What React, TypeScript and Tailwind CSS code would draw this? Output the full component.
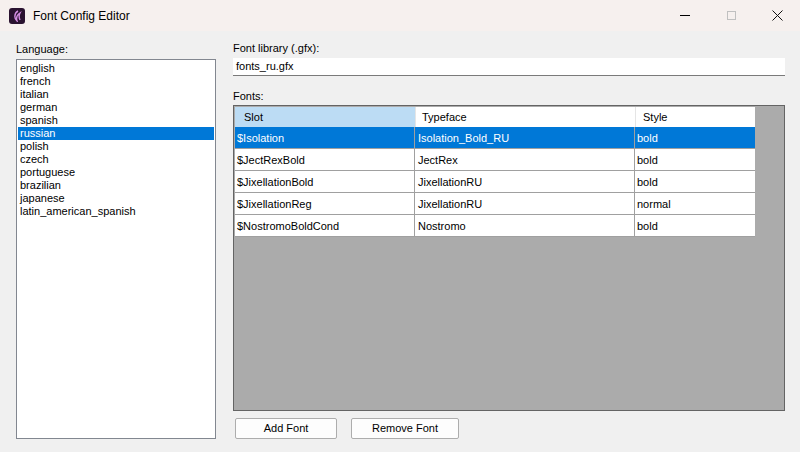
const langs = ["english","french","italian","german","spanish","russian","polish","czech","portuguese","brazilian","japanese","latin_american_spanish"];
const rows = [
  ["$Isolation","Isolation_Bold_RU","bold"],
  ["$JectRexBold","JectRex","bold"],
  ["$JixellationBold","JixellationRU","bold"],
  ["$JixellationReg","JixellationRU","normal"],
  ["$NostromoBoldCond","Nostromo","bold"],
];

export default function App() {
  return (
    <div className="w-[800px] h-[452px] flex flex-col bg-[#f0f0f0] text-[11px] text-black overflow-hidden" style={{ fontFamily: '"Liberation Sans", Arial, sans-serif' }}>
      <div className="h-[31px] bg-[#f6f0ee] flex items-center shrink-0">
        <div className="ml-[9px] w-[16px] h-[16px] rounded-[3px] bg-[#2a1230] flex items-center justify-center">
          <svg width="12" height="12" viewBox="0 0 12 12"><path d="M7 1 C3 3 3 9 6 11 C5 8 6 5 9 3 C8 5 8 8 9 10" stroke="#d28ce0" strokeWidth="1.4" fill="none"/></svg>
        </div>
        <span className="ml-[8px] text-[12px]">Font Config Editor</span>
        <div className="ml-auto flex h-full">
          <div className="w-[46px] flex items-center justify-center"><div className="w-[10px] h-px bg-black" /></div>
          <div className="w-[46px] flex items-center justify-center"><div className="w-[9px] h-[9px] border border-[#c0c0c0]" /></div>
          <div className="w-[46px] flex items-center justify-center">
            <svg width="11" height="11" viewBox="0 0 11 11"><path d="M0.5 0.5L10.5 10.5M10.5 0.5L0.5 10.5" stroke="#111" strokeWidth="1"/></svg>
          </div>
        </div>
      </div>
      <div className="flex flex-1 pl-[16px] pr-[15px] pt-[9px] pb-[13px] gap-[17px]">
        <div className="w-[200px] flex flex-col">
          <div className="h-[19px] leading-[19px]">Language:</div>
          <div className="flex-1 bg-white border border-[#828790] pt-[2px] px-px">
            {langs.map((l) => (
              <div key={l} className={`h-[13px] leading-[13px] pl-[2px] ${l === "russian" ? "bg-[#0078d7] text-white" : ""}`}>{l}</div>
            ))}
          </div>
        </div>
        <div className="flex-1 flex flex-col">
          <div className="h-[14px] leading-[14px] pt-px">Font library (.gfx):</div>
          <div className="mt-[4px] h-[18px] bg-white border-b border-[#7a7a7a] px-[3px] leading-[17px]">fonts_ru.gfx</div>
          <div className="mt-[12px] h-[16px] leading-[16px]">Fonts:</div>
          <div className="mt-px flex-1 bg-[#ababab] border border-[#646464] p-px">
            <div className="w-[520px] bg-white">
              <div className="flex h-[20px] leading-[20px]">
                <div className="w-[180px] bg-[#bcdcf4] pl-[9px]">Slot</div>
                <div className="w-[220px] border-l border-[#e5e5e5] pl-[6px]">Typeface</div>
                <div className="w-[120px] border-l border-[#e5e5e5] pl-[7px]">Style</div>
              </div>
            </div>
            {rows.map((r, i) => (
              <div key={i} className={`w-[520px] flex h-[22px] leading-[22px] border-b border-[#a0a0a0] ${i === 0 ? "bg-[#0078d7] text-white" : "bg-white"}`}>
                <div className="w-[180px] pl-[2px] border-r border-[#a0a0a0]">{r[0]}</div>
                <div className="w-[220px] pl-[3px] border-r border-[#a0a0a0]">{r[1]}</div>
                <div className="w-[120px] pl-[2px]">{r[2]}</div>
              </div>
            ))}
          </div>
          <div className="mt-[7px] flex gap-[14px] pl-[2px]">
            <button className="w-[102px] h-[21px] bg-[#fdfdfd] border border-[#adadad] rounded-[2px]">Add Font</button>
            <button className="w-[108px] h-[21px] bg-[#fdfdfd] border border-[#adadad] rounded-[2px]">Remove Font</button>
          </div>
        </div>
      </div>
    </div>
  );
}
